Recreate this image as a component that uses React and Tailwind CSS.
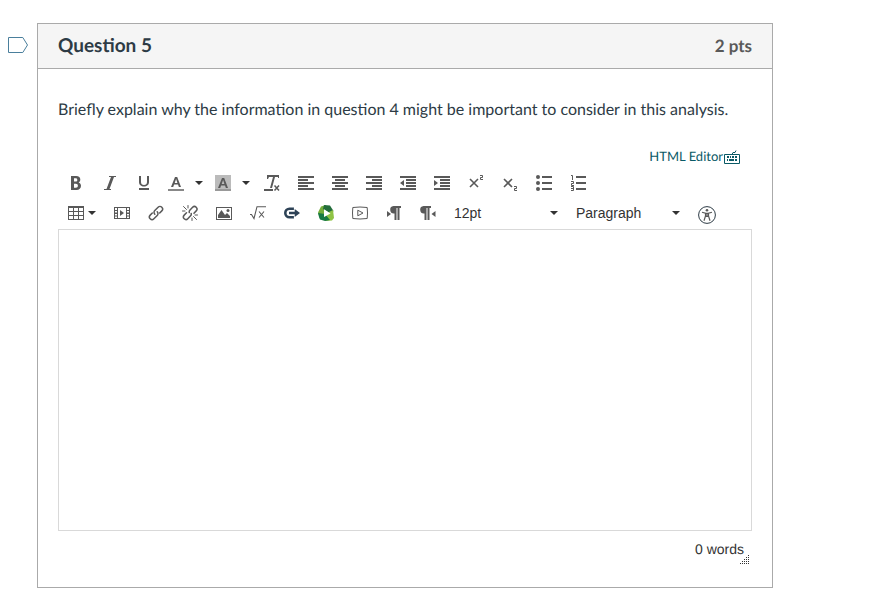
const Icon = ({ children, className = "h-4 w-4" }) => (
  <svg viewBox="0 0 16 16" className={className} fill="currentColor" aria-hidden="true">
    {children}
  </svg>
);

const Caret = () => (
  <svg viewBox="0 0 8 4" className="h-1 w-2 text-[#333]" fill="currentColor" aria-hidden="true">
    <path d="M0 0h8L4 4z" />
  </svg>
);

const Tool = ({ label, children }) => (
  <button type="button" aria-label={label} className="flex h-[30px] w-[34px] items-center justify-center">
    <Icon>{children}</Icon>
  </button>
);

const ColorTool = ({ label, children }) => (
  <div className="flex">
    <button type="button" aria-label={label} className="flex h-[30px] w-[30px] items-center justify-center">
      <Icon>{children}</Icon>
    </button>
    <button type="button" aria-label={`${label} options`} className="flex h-[30px] w-[17px] items-center pl-1">
      <Caret />
    </button>
  </div>
);

const Picker = ({ label, options }) => (
  <div className="relative w-[122px]">
    <select
      aria-label={label}
      className="h-[30px] w-full appearance-none bg-transparent pl-[9px] text-sm text-[#333] outline-none"
    >
      {options.map((o) => (
        <option key={o}>{o}</option>
      ))}
    </select>
    <span className="pointer-events-none absolute inset-y-0 right-[9px] flex items-center">
      <Caret />
    </span>
  </div>
);

const Pilcrow = () => <path d="M7.500 1H15v2h-1.500v12h-2V3h-1v12h-2V8.500a3.750 3.750 0 0 1-1-7.500z" />;

export default function App() {
  return (
    <main className="flex gap-[9px] pt-[23px] pr-24 pb-4 pl-2 font-[Lato,sans-serif] text-[#2d3b45] [text-rendering:geometricPrecision]">
      <button type="button" aria-label="Flag question" className="mt-3.5 h-4 w-5 shrink-0">
        <svg viewBox="0 0 20 16" className="h-4 w-5" fill="none" stroke="#4a7f9c" aria-hidden="true">
          <path d="M.5.5h14.300l4.700 7.500-4.700 7.500H.5z" />
        </svg>
      </button>

      <section className="min-w-0 flex-1 border border-[#aaa]">
        <header className="flex h-[45px] items-center justify-between border-b border-[#aaa] bg-[#f5f5f5] px-5 font-bold">
          <h1 className="text-[19px]">Question 5</h1>
          <span className="text-[17px] text-[#595959]">2 pts</span>
        </header>

        <div className="px-5 pt-[29px] pb-5">
          <p className="text-base">
            Briefly explain why the information in question 4 might be important to consider in this analysis.
          </p>

          <div className="mt-6 flex items-center justify-end pr-3 text-[13px] leading-5 text-[#0a5a66]">
            <a href="#html">HTML Editor</a>
            <button type="button" aria-label="Keyboard shortcuts" className="mt-1">
              <Icon className="ml-px h-4 w-4">
                <path d="M.5 4.500h15v9H.5zM8 4.500l1-2h2L12 .5" fill="none" stroke="currentColor" />
                <path d="M3 6h2v2H3zM6 6h1v2H6zM8 6h2v2H8zM11 6h2v2h-2zM3 9h1v2H3zM5 9h5v2H5zM11 9h2v2h-2z" />
              </Icon>
            </button>
          </div>

          <div className="pt-0.5 pl-px font-['Liberation_Sans',sans-serif] text-[#595959]" role="toolbar" aria-label="Formatting">
            <div className="flex flex-wrap">
              <Tool label="Bold">
                <path fillRule="evenodd" d="M3 1h5.200C10.900 1 12.300 2.400 12.300 4.600c0 1.400-.6 2.300-1.700 2.900 1.500.5 2.400 1.600 2.400 3.300C13 13.500 11.300 15 8.500 15H3zm3 2.300v3.200h1.700c1 0 1.600-.6 1.600-1.600s-.6-1.600-1.600-1.600zM6 8.800v3.900h1.900c1.300 0 2-.7 2-1.900 0-1.300-.7-2-2-2z" />
              </Tool>
              <Tool label="Italic">
                <path d="M14 1v1h-2L7.500 14H9v1H2v-1h2.500L9 2H7V1z" />
              </Tool>
              <Tool label="Underline">
                <path d="M3 1h2v6a3 3 0 0 0 6 0V1h2v6c0 2.800-2.200 4.500-5 4.500S3 9.800 3 7zM3 13h10v2H3z" />
              </Tool>
              <ColorTool label="Text color">
                <path fillRule="evenodd" d="M7 2h2.200L13 12h-2.100l-.9-2.500H6.100L5.200 12H3zm1.100 2L6.700 7.900h2.700z" />
                <path d="M0 14h16v2H0z" fill="#888" />
              </ColorTool>
              <ColorTool label="Background color">
                <path d="M0 0h16v16H0z" fill="#bbb" />
                <path d="M0 14h16v2H0z" fill="#999" />
                <path fillRule="evenodd" d="M7 3h2.200L13 13h-2.100l-.9-2.500H6.100L5.200 13H3zm1.100 2L6.700 8.900h2.700z" />
              </ColorTool>
              <Tool label="Clear formatting">
                <path d="M3 0h12v3h-1V2h-3L8 13H6L9 2H5L4 4H3zM0 14h9v2H0z" />
                <path d="m10.500 10.500 4.500 5m0-5-4.500 5" stroke="currentColor" strokeWidth="1.500" />
              </Tool>
              <Tool label="Align left">
                <path d="M0 1h16v2H0zM0 4h10v2H0zM0 7h16v2H0zM0 10h10v2H0zM0 13h16v2H0z" />
              </Tool>
              <Tool label="Align center">
                <path d="M0 1h16v2H0zM3 4h10v2H3zM0 7h16v2H0zM3 10h10v2H3zM0 13h16v2H0z" />
              </Tool>
              <Tool label="Align right">
                <path d="M0 1h16v2H0zM6 4h10v2H6zM0 7h16v2H0zM6 10h10v2H6zM0 13h16v2H0z" />
              </Tool>
              <Tool label="Decrease indent">
                <path d="M0 1h16v2H0zM6 4h10v2H6zM6 7h10v2H6zM6 10h10v2H6zM0 13h16v2H0zM4 5v6L0 8z" />
              </Tool>
              <Tool label="Increase indent">
                <path d="M0 1h16v2H0zM6 4h10v2H6zM6 7h10v2H6zM6 10h10v2H6zM0 13h16v2H0zM0 5v6l4-3z" />
              </Tool>
              <Tool label="Superscript">
                <path d="m2 4 8 8m0-8-8 8" stroke="currentColor" strokeWidth="1.600" />
                <path d="M12 .5h2.500v2h-2v2H15" fill="none" stroke="currentColor" />
              </Tool>
              <Tool label="Subscript">
                <path d="m2 4 8 8m0-8-8 8" stroke="currentColor" strokeWidth="1.600" />
                <path d="M12 11.500h2.500v2h-2v2H15" fill="none" stroke="currentColor" />
              </Tool>
              <Tool label="Bulleted list">
                <path d="M6 1h10v2H6zM6 7h10v2H6zM6 13h10v2H6z" />
                <circle cx="2" cy="2" r="2" />
                <circle cx="2" cy="8" r="2" />
                <circle cx="2" cy="14" r="2" />
              </Tool>
              <Tool label="Numbered list">
                <path d="M6 1h10v2H6zM6 7h10v2H6zM6 13h10v2H6z" />
                <path d="M1 .5h1.500V5M1 6.500h2.500v2h-2v2H4M1 11.500h2.500v4H1m0-2h2.500" fill="none" stroke="currentColor" />
              </Tool>
            </div>

            <div className="flex flex-wrap">
              <button type="button" aria-label="Table" className="flex h-[30px] w-[46px] items-center gap-1 pl-[9px]">
                <Icon>
                  <path fillRule="evenodd" d="M0 1h16v14H0zm1 2v3h4V3zm5 0v3h4V3zm5 0v3h4V3zM1 7v3h4V7zm5 0v3h4V7zm5 0v3h4V7zM1 11v3h4v-3zm5 0v3h4v-3zm5 0v3h4v-3z" />
                </Icon>
                <Caret />
              </button>
              <Tool label="Media">
                <path fillRule="evenodd" d="M0 2h16v12H0zm1 1v2h2V3zm0 3v1.500h2V6zm0 3v1.500h2V9zm0 2.500V13h2v-1.500zM4 3v10h8V3zm9 0v2h2V3zm0 3v1.500h2V6zm0 3v1.500h2V9zm0 2.500V13h2v-1.500z" />
                <path d="M6 5v6l4-3z" />
              </Tool>
              <Tool label="Insert link">
                <g fill="none" stroke="currentColor" strokeWidth="1.500" strokeLinecap="round">
                  <path d="M6.800 9.200a2.600 2.600 0 0 1 0-3.700l3.300-3.300a2.600 2.600 0 0 1 3.700 3.700L11.700 8" />
                  <path d="M9.200 6.800a2.600 2.600 0 0 1 0 3.700l-3.300 3.300a2.600 2.600 0 0 1-3.700-3.700L4.300 8" />
                </g>
              </Tool>
              <Tool label="Remove link">
                <g fill="none" stroke="currentColor" strokeWidth="1.500" strokeLinecap="round">
                  <path d="M7.300 7.500a2.500 2.500 0 0 1 .5-2.300l2.800-2.900a2.500 2.500 0 0 1 3.600 3.600L12 8.200" />
                  <path d="M9.200 8.500a2.500 2.500 0 0 1-.6 2.300l-2.800 2.900a2.500 2.500 0 0 1-3.600-3.600L4.500 7.800" />
                  <path d="m1.500 1.500 3 3M6 .5V3M.5 6H3m11.500 8.500-3-3m-1.500 4V13m5.500-3H13" strokeWidth="1" />
                </g>
              </Tool>
              <Tool label="Insert image">
                <path fillRule="evenodd" d="M0 2h16v13H0zm1 1v11h14V3z" />
                <path d="M2 13v-3l3.500-5L9 10l2-2 3 3v2z" />
                <circle cx="12" cy="5.500" r="1.500" />
              </Tool>
              <Tool label="Insert equation">
                <path d="M0 9.500h1.500l2.500 4 3-11.800h9M9 6.500l5 6m0-6-5 6" fill="none" stroke="currentColor" strokeWidth="1.100" />
              </Tool>
              <Tool label="External tool">
                <g className="text-[#2d4256]">
                  <path d="M10 3.800H5.500a4.200 4.200 0 0 0 0 8.400H10" fill="none" stroke="currentColor" strokeWidth="2.600" />
                  <path d="M5 6.700h5.700V4L16 8l-5.300 4V9.300H5z" stroke="#fff" strokeWidth="1.600" paintOrder="stroke" />
                </g>
              </Tool>
              <Tool label="Media gallery">
                <path d="M8 0 3 1.500 0 7.500l2 6L7 9z" fill="#74ad3b" />
                <path d="m6 0 6 .5L15.500 6 13 9 5 4z" fill="#236d3b" />
                <path d="m15 5 1 8-2 2.500L7 16V9z" fill="#8fc345" />
                <path d="m1 12 1 2.500L7 16l5-1-5-6-7-1z" fill="#187a43" />
                <path d="M6 4.200 12.500 8.500 6 12z" fill="#fff" />
              </Tool>
              <Tool label="Insert video">
                <path d="M.8 2.500q7.200-1 14.400 0 .6 5.500 0 11-7.200 1-14.400 0-.6-5.500 0-11zM5.800 5.200v5.600L11 8z" fill="none" stroke="currentColor" />
              </Tool>
              <Tool label="Left to right">
                <Pilcrow />
                <path d="M1 6v6l4-3z" />
              </Tool>
              <Tool label="Right to left">
                <g transform="translate(-4 0)">
                  <Pilcrow />
                </g>
                <path d="M15.500 6v6l-4-3z" />
              </Tool>
              <Picker label="Font size" options={["12pt", "14pt", "18pt"]} />
              <Picker label="Block format" options={["Paragraph", "Heading 2", "Heading 3"]} />
              <button type="button" aria-label="Check accessibility" className="flex h-[30px] w-9 items-center justify-center pt-1">
                <svg viewBox="0 0 18 18" className="h-[18px] w-[18px] text-[#2d3b45]" fill="none" stroke="currentColor" aria-hidden="true">
                  <circle cx="9" cy="9" r="8.400" />
                  <circle cx="9" cy="4.200" r="1.300" fill="#595959" stroke="none" />
                  <path d="m4 6.200 3.500 1.100V10L6 14.800M14 6.200l-3.500 1.100V10l1.500 4.800M7.500 7.300h3M7.500 10.300h3M9 7v3.500" stroke="#595959" strokeWidth="1.200" />
                </svg>
              </button>
            </div>
          </div>

          <textarea
            aria-label="Answer"
            className="mt-px block h-[302px] w-full resize-none border border-[#d9d9d9] p-2 outline-none"
          />

          <div className="flex h-9 justify-end pt-2 pr-[3px] font-['Liberation_Sans',sans-serif] text-sm text-[#333]">
            <span>0 words</span>
            <svg viewBox="0 0 10 10" className="mt-4 -ml-[5px] h-2.5 w-2.5" fill="#333" aria-hidden="true">
              <path d="M9 0h1v1H9zM7 2h1v1H7zM9 2h1v1H9zM5 4h1v1H5zM7 4h1v1H7zM9 4h1v1H9zM3 6h1v1H3zM5 6h1v1H5zM7 6h1v1H7zM9 6h1v1H9zM1 8h1v1H1zM3 8h1v1H3zM5 8h1v1H5zM7 8h1v1H7zM9 8h1v1H9z" />
            </svg>
          </div>
        </div>
      </section>
    </main>
  );
}
